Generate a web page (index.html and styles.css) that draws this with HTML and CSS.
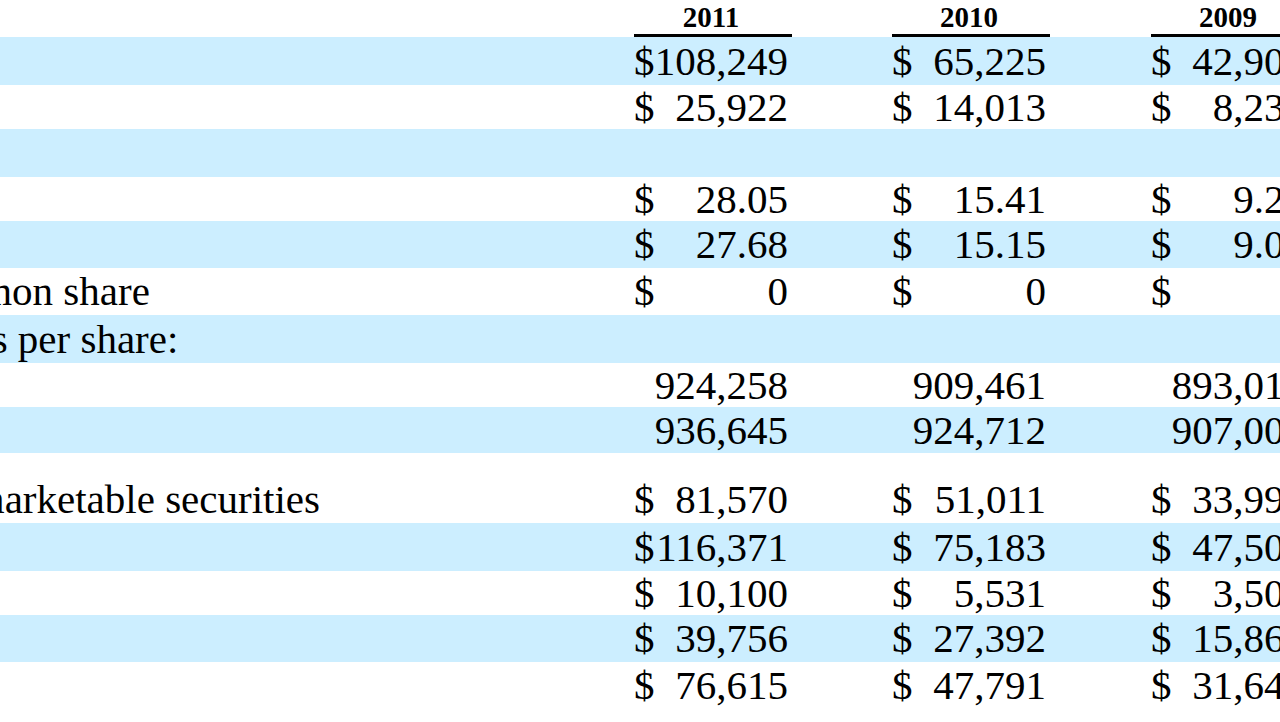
FILE: index.html
```html
<!DOCTYPE html>
<html lang="en">
<head>
<meta charset="utf-8">
<title>Selected Financial Data</title>
<link rel="stylesheet" href="styles.css">
</head>
<body>
<table class="fin">
  <colgroup>
    <col class="c-label"><col class="c-data"><col class="c-gap"><col class="c-data"><col class="c-gap2"><col class="c-data">
  </colgroup>
  <thead>
    <tr class="head">
      <th class="label"></th>
      <th class="year">2011</th>
      <th class="gap"></th>
      <th class="year">2010</th>
      <th class="gap"></th>
      <th class="year">2009</th>
    </tr>
  </thead>
  <tbody>
    <tr class="band r48">
      <td class="label">Net sales</td>
      <td class="val"><div class="amt"><span class="cur">$</span><span class="num">108,249</span></div></td>
      <td class="gap"></td>
      <td class="val"><div class="amt"><span class="cur">$</span><span class="num">65,225</span></div></td>
      <td class="gap"></td>
      <td class="val"><div class="amt"><span class="cur">$</span><span class="num">42,905</span></div></td>
    </tr>
    <tr class="r44">
      <td class="label">Net income</td>
      <td class="val"><div class="amt"><span class="cur">$</span><span class="num">25,922</span></div></td>
      <td class="gap"></td>
      <td class="val"><div class="amt"><span class="cur">$</span><span class="num">14,013</span></div></td>
      <td class="gap"></td>
      <td class="val"><div class="amt"><span class="cur">$</span><span class="num">8,235</span></div></td>
    </tr>
    <tr class="band r48">
      <td class="label">Earnings per common share:</td>
      <td class="val"></td>
      <td class="gap"></td>
      <td class="val"></td>
      <td class="gap"></td>
      <td class="val"></td>
    </tr>
    <tr class="r44">
      <td class="label sub">Basic</td>
      <td class="val"><div class="amt"><span class="cur">$</span><span class="num">28.05</span></div></td>
      <td class="gap"></td>
      <td class="val"><div class="amt"><span class="cur">$</span><span class="num">15.41</span></div></td>
      <td class="gap"></td>
      <td class="val"><div class="amt"><span class="cur">$</span><span class="num">9.22</span></div></td>
    </tr>
    <tr class="band r47">
      <td class="label sub">Diluted</td>
      <td class="val"><div class="amt"><span class="cur">$</span><span class="num">27.68</span></div></td>
      <td class="gap"></td>
      <td class="val"><div class="amt"><span class="cur">$</span><span class="num">15.15</span></div></td>
      <td class="gap"></td>
      <td class="val"><div class="amt"><span class="cur">$</span><span class="num">9.08</span></div></td>
    </tr>
    <tr class="r47">
      <td class="label">Cash dividends declared per common share</td>
      <td class="val"><div class="amt"><span class="cur">$</span><span class="num">0</span></div></td>
      <td class="gap"></td>
      <td class="val"><div class="amt"><span class="cur">$</span><span class="num">0</span></div></td>
      <td class="gap"></td>
      <td class="val"><div class="amt"><span class="cur">$</span><span class="num">0</span></div></td>
    </tr>
    <tr class="band r48">
      <td class="label">Shares used in computing earnings per share:</td>
      <td class="val"></td>
      <td class="gap"></td>
      <td class="val"></td>
      <td class="gap"></td>
      <td class="val"></td>
    </tr>
    <tr class="r44">
      <td class="label sub">Basic</td>
      <td class="val"><div class="amt"><span class="num">924,258</span></div></td>
      <td class="gap"></td>
      <td class="val"><div class="amt"><span class="num">909,461</span></div></td>
      <td class="gap"></td>
      <td class="val"><div class="amt"><span class="num">893,016</span></div></td>
    </tr>
    <tr class="band r46">
      <td class="label sub">Diluted</td>
      <td class="val"><div class="amt"><span class="num">936,645</span></div></td>
      <td class="gap"></td>
      <td class="val"><div class="amt"><span class="num">924,712</span></div></td>
      <td class="gap"></td>
      <td class="val"><div class="amt"><span class="num">907,005</span></div></td>
    </tr>
    <tr class="spacer">
      <td class="label"></td><td class="val"></td><td class="gap"></td><td class="val"></td><td class="gap"></td><td class="val"></td>
    </tr>
    <tr class="r47">
      <td class="label">Total cash, cash equivalents and marketable securities</td>
      <td class="val"><div class="amt"><span class="cur">$</span><span class="num">81,570</span></div></td>
      <td class="gap"></td>
      <td class="val"><div class="amt"><span class="cur">$</span><span class="num">51,011</span></div></td>
      <td class="gap"></td>
      <td class="val"><div class="amt"><span class="cur">$</span><span class="num">33,992</span></div></td>
    </tr>
    <tr class="band r48">
      <td class="label">Total assets</td>
      <td class="val"><div class="amt"><span class="cur">$</span><span class="num">116,371</span></div></td>
      <td class="gap"></td>
      <td class="val"><div class="amt"><span class="cur">$</span><span class="num">75,183</span></div></td>
      <td class="gap"></td>
      <td class="val"><div class="amt"><span class="cur">$</span><span class="num">47,501</span></div></td>
    </tr>
    <tr class="r44">
      <td class="label">Long-term obligations (a)</td>
      <td class="val"><div class="amt"><span class="cur">$</span><span class="num">10,100</span></div></td>
      <td class="gap"></td>
      <td class="val"><div class="amt"><span class="cur">$</span><span class="num">5,531</span></div></td>
      <td class="gap"></td>
      <td class="val"><div class="amt"><span class="cur">$</span><span class="num">3,502</span></div></td>
    </tr>
    <tr class="band r47">
      <td class="label">Total liabilities</td>
      <td class="val"><div class="amt"><span class="cur">$</span><span class="num">39,756</span></div></td>
      <td class="gap"></td>
      <td class="val"><div class="amt"><span class="cur">$</span><span class="num">27,392</span></div></td>
      <td class="gap"></td>
      <td class="val"><div class="amt"><span class="cur">$</span><span class="num">15,861</span></div></td>
    </tr>
    <tr class="r47">
      <td class="label">Shareholders&rsquo; equity</td>
      <td class="val"><div class="amt"><span class="cur">$</span><span class="num">76,615</span></div></td>
      <td class="gap"></td>
      <td class="val"><div class="amt"><span class="cur">$</span><span class="num">47,791</span></div></td>
      <td class="gap"></td>
      <td class="val"><div class="amt"><span class="cur">$</span><span class="num">31,640</span></div></td>
    </tr>
  </tbody>
</table>
</body>
</html>
```

FILE: styles.css
```css
html,
body {
  margin: 0;
  padding: 0;
  overflow: hidden;
  background: #ffffff;
}

body {
  width: 1280px;
  height: 722px;
  font-family: "Liberation Serif", "Times New Roman", serif;
  color: #000000;
}

.fin {
  margin-left: -564px;
  width: 1873px;
  table-layout: fixed;
  border-collapse: separate;
  border-spacing: 0;
  font-size: 41px;
  line-height: 41px;
}

.c-label { width: 1198px; }
.c-data { width: 158px; }
.c-gap { width: 100px; }
.c-gap2 { width: 101px; }

.fin th,
.fin td {
  padding: 0;
  vertical-align: middle;
  font-weight: normal;
  white-space: nowrap;
  text-align: left;
}

.head { height: 37px; }

.fin .year {
  border-bottom: 3px solid #000000;
  font-weight: bold;
  font-size: 29px;
  line-height: 29px;
  text-align: center;
  padding-right: 4px;
}

.band { background: #cceeff; }

.r44 { height: 44px; }
.r46 { height: 46px; }
.r47 { height: 47px; }
.r48 { height: 48px; }
.spacer { height: 23px; }

.fin .sub { padding-left: 41px; }

.amt {
  display: flex;
  justify-content: space-between;
  padding-right: 4px;
}

.num { margin-left: auto; }
```
